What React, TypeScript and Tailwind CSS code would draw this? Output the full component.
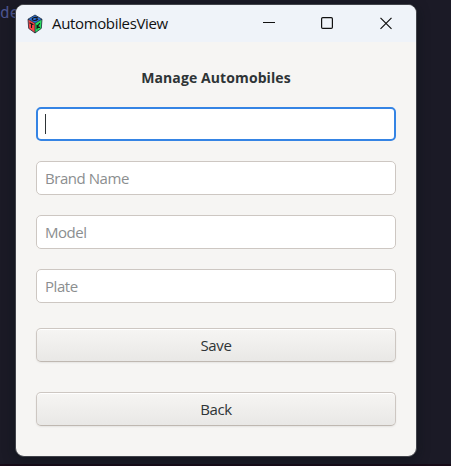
import React from 'react';

const fieldBase =
  'block h-[34px] w-full rounded-[5px] bg-white text-[15px] text-[#2e3436] outline-none placeholder:text-[#8b8e8f] placeholder:opacity-100';

function Field({ label }: { label: string }) {
  return (
    <input
      className={`${fieldBase} border border-[#cdc7c2] px-2 tracking-[-0.45px]`}
      placeholder={label}
    />
  );
}

function ActionButton({ label }: { label: string }) {
  return (
    <button className="flex h-[34px] w-full items-center justify-center rounded-[5px] border border-[#cdc7c2] border-b-[#bfb8b1] bg-linear-to-b from-[#f6f5f3] to-[#e9e8e6] text-[15px] tracking-[-0.4px] text-[#2e3436] shadow-[inset_0_1px_#ffffff,0_1px_2px_rgba(0,0,0,0.07)]">
      {label}
    </button>
  );
}

function GtkLogo() {
  return (
    <svg width="16" height="20" viewBox="0 0 16 20" className="block">
      <path d="M8 1 15 5.2 8 9.2 1 5.2Z" fill="#2b6fd6" />
      <path d="M1 5.2 8 9.2V19L1.7 14.4Z" fill="#f84545" />
      <path d="M15 5.2 8 9.2V19L14.3 14.4Z" fill="#27e05f" />
      <path
        d="M8 1 15 5.2 14.3 14.4 8 19 1.7 14.4 1 5.2ZM1 5.2 8 9.2 15 5.2M8 9.2V19"
        fill="none"
        stroke="#1b2a3a"
        strokeWidth="0.8"
        strokeLinejoin="round"
      />
      <path
        d="M10.8 4C9 2.8 5.4 3.6 5.2 5.1 5.4 6.8 9.3 7 10.4 5.4L8.6 5.1M2.6 8.8 6.4 10.8M4.5 9.8V14M10 10.8V15.2M12.8 9.2 10.4 12.4 13 13.4"
        fill="none"
        stroke="#161616"
        strokeWidth="1.1"
      />
    </svg>
  );
}

export default function App() {
  return (
    <div className="relative h-[466px] w-[451px] overflow-hidden bg-[#1b1a26] pl-[15px] pt-[4px] font-['Open_Sans','Noto_Sans',sans-serif]">
      <span className="absolute left-0 top-[3px] font-['DejaVu_Sans_Mono',monospace] text-[16px] leading-5 text-[#4d5590]">
        de
      </span>
      <div className="absolute inset-x-0 bottom-0 h-[2px] bg-[#170b18]" />
      <main className="relative h-[453px] w-[402px] overflow-hidden rounded-[9px] border border-[#41434a] bg-[#f6f5f3] shadow-[0_3px_12px_rgba(10,18,22,0.55)]">
        <header className="flex h-[37px] items-center bg-[#eff3f9] pl-[11px]">
          <GtkLogo />
          <h1 className="ml-[9px] text-[15px] tracking-[-0.35px] text-[#111111]">AutomobilesView</h1>
          <svg width="130" height="14" viewBox="0 0 130 14" className="ml-auto mr-[23px] block" fill="none" stroke="#111111">
            <path d="M0 5.5H12" />
            <rect x="58.6" y="0.6" width="10.8" height="10.8" rx="1.2" strokeWidth="1.2" />
            <path d="M117.5 0.8 128.5 11.8M128.5 0.8 117.5 11.8" strokeWidth="1.2" />
          </svg>
        </header>
        <div className="px-5 pt-[24px]">
          <h2 className="mb-[17px] text-center text-[14px] font-bold leading-6 tracking-[0.1px] text-[#2e3436]">Manage Automobiles</h2>
          <div className="flex flex-col gap-5">
            <input className={`${fieldBase} border-2 border-[#3584e4] px-2`} />
            <Field label="Brand Name" />
            <Field label="Model" />
            <Field label="Plate" />
          </div>
          <div className="mt-[25px] flex flex-col gap-[30px]">
            <ActionButton label="Save" />
            <ActionButton label="Back" />
          </div>
        </div>
        <span className="absolute left-[29px] top-[109px] h-5 w-px bg-[#2e3436]" />
      </main>
    </div>
  );
}
